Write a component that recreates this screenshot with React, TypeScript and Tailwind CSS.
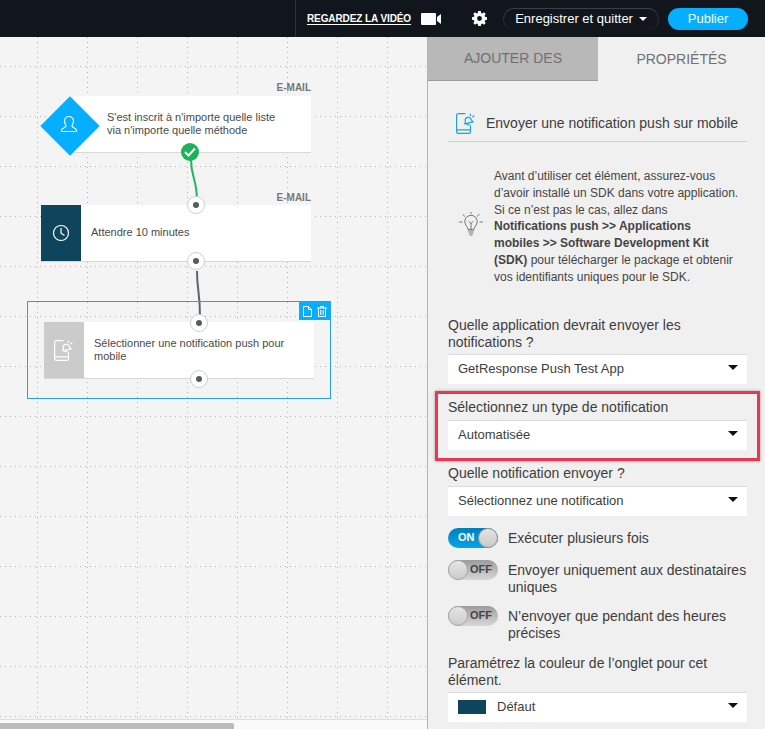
import React from "react";

const hLines = Array.from({ length: 15 }, (_, i) => 16 + i * 50);
const vLines = Array.from({ length: 9 }, (_, i) => 37.5 + i * 50);

function Grid() {
  return (
    <svg className="absolute inset-0" width="427" height="692">
      {hLines.map((y) => (
        <line key={y} x1="0" x2="427" y1={y - 37 + 0.5} y2={y - 37 + 0.5} stroke="#b4b4b4" strokeWidth="1" strokeDasharray="1 4" />
      ))}
      {vLines.map((x) => (
        <line key={x} y1="0" y2="692" x1={x} x2={x} stroke="#b4b4b4" strokeWidth="1" strokeDasharray="1 4" />
      ))}
    </svg>
  );
}

function Port({ x, y }: { x: number; y: number }) {
  return (
    <div
      className="absolute w-[18px] h-[18px] rounded-full bg-white border border-[#cfcfcf] flex items-center justify-center"
      style={{ left: x - 9, top: y - 9 }}
    >
      <div className="w-[6px] h-[6px] rounded-full bg-[#555b60]" />
    </div>
  );
}

function PushIcon({ color }: { color: string }) {
  return (
    <svg width="20" height="21" viewBox="0 0 20 21" fill="none" stroke={color} strokeWidth="1.2" strokeLinecap="round" strokeLinejoin="round">
      <path d="M9 .6H2.200A1.600 1.600 0 0 0 .6 2.200v16.600a1.600 1.600 0 0 0 1.600 1.600h10.700a1.600 1.600 0 0 0 1.600-1.600v-6.300" />
      <path d="M.6 16.800h13.900" />
      <path d="M8.500 10.800c1.100-.7 1-1.700.8-3-.3-1.800.8-3.200 2.300-3.500 1.600-.3 3 .7 3.600 2.200.5 1.300 1 2 2 2.300z" />
      <path d="M10.500 10.800c.5 1 1.600 1.300 2.600.7" />
      <path d="M14.200 1.200l.5 1.300M18 2.800l-1.200 1" />
    </svg>
  );
}

function Caret() {
  return <div className="w-0 h-0 border-x-[5px] border-x-transparent border-t-[5px] border-t-[#111]" />;
}

function Select({ label, swatch, className }: { label: string; swatch?: boolean; className?: string }) {
  return (
    <div className={`h-[30px] bg-white border-t border-[#dcdcdc] flex items-center justify-between pl-[10px] pr-[9px] text-[13px] text-[#3d3d3d] ${className ?? ""}`}>
      <div className="flex items-center">
        {swatch && <div className="w-[28px] h-[14px] bg-[#0e455c] mr-[11px]" />}
        <span>{label}</span>
      </div>
      <div className="-mt-[3px]">
        <Caret />
      </div>
    </div>
  );
}

function Toggle({ on }: { on?: boolean }) {
  return on ? (
    <div className="relative w-[50px] h-[20px] rounded-full bg-gradient-to-b from-[#0080bd] to-[#06a5e6] shrink-0">
      <span className="absolute left-[10px] top-[2px] text-[11px] leading-[15px] font-bold text-white">ON</span>
      <div className="absolute right-0 top-0 w-[20px] h-[20px] rounded-full bg-gradient-to-b from-[#e4e4e4] to-[#c8c8c8] border border-[#9a9a9a]" />
    </div>
  ) : (
    <div className="relative w-[50px] h-[20px] rounded-full bg-gradient-to-b from-[#9c9c9c] to-[#d8d8d8] shrink-0">
      <div className="absolute left-0 top-0 w-[20px] h-[20px] rounded-full bg-gradient-to-b from-[#e6e6e6] to-[#cbcbcb] border border-[#a5a5a5]" />
      <span className="absolute left-[22px] top-[2px] text-[11px] leading-[15px] font-bold text-[#444]">OFF</span>
    </div>
  );
}

export default function App() {
  return (
    <div className="w-[765px] h-[729px] overflow-hidden flex flex-col bg-[#f4f4f4] text-[#3d3d3d] font-['Liberation_Sans',Arial,sans-serif]">
      {/* top bar */}
      <header className="h-[37px] shrink-0 bg-[#10161b] flex items-center">
        <div className="w-[295px] h-full" />
        <div className="w-px h-full bg-[#2b3238]" />
        <span className="ml-[11px] text-[10px] font-bold text-white underline underline-offset-2 tracking-[-0.1px]">REGARDEZ LA VIDÉO</span>
        <svg className="ml-[10px]" width="20" height="12" viewBox="0 0 20 12" fill="#fff">
          <rect x="0" y="0" width="15" height="12" rx="1" />
          <path d="M16 4l4-3v10l-4-3z" />
        </svg>
        <svg className="ml-[31px]" width="15" height="15" viewBox="0 0 16 16" fill="#fff">
          <path fillRule="evenodd" d="M6.600 0h2.800l.4 2.100 1.200.5L12.800 1.400 14.600 3.200 13.400 5l.5 1.200 2.100.4v2.800l-2.100.4-.5 1.200 1.200 1.800-1.800 1.800-1.800-1.200-1.200.5-.4 2.100H6.600l-.4-2.100-1.200-.5-1.800 1.200-1.800-1.800L2.600 11l-.5-1.200L0 9.400V6.600l2.100-.4.5-1.200L1.400 3.200 3.200 1.400 5 2.600l1.200-.5zM8 5.400a2.600 2.600 0 1 0 0 5.200 2.600 2.600 0 0 0 0-5.200z" />
        </svg>
        <div className="ml-[16px] w-[156px] h-[22px] rounded-full border-t border-x border-t-[#3a4046] border-x-[#2a3036] flex items-center justify-center gap-[6px] text-[13px] text-white">
          <span>Enregistrer et quitter</span>
          <div className="w-0 h-0 border-x-[4px] border-x-transparent border-t-[4px] border-t-white" />
        </div>
        <div className="ml-[9px] w-[80px] h-[22px] rounded-full bg-[#05aeff] flex items-center justify-center text-[13px] text-white">Publier</div>
      </header>
      <div className="flex-1 flex min-h-0">
        {/* canvas */}
        <main className="relative w-[427px] shrink-0 overflow-hidden bg-[#f4f4f4]">
          <Grid />

          <svg className="absolute inset-0" width="427" height="692" fill="none">
            <path d="M191 122c0 20 6 18 6 43" stroke="#1fb45f" strokeWidth="2" />
            <path d="M197 234c0 20 3 20 3 46" stroke="#5d6266" strokeWidth="2" />
          </svg>

          {/* Node 1 */}
          <div className="absolute right-[116px] top-[45px] text-[10px] leading-[12px] font-bold text-[#777]">E-MAIL</div>
          <div className="absolute left-[71px] top-[59px] w-[240px] h-[57px] bg-white border-b border-[#d8d8d8] flex items-center pl-[36px] pr-[20px] text-[11px] leading-[13px] text-[#4a4a4a]">
            <span>S'est inscrit à n'importe quelle liste via n'importe quelle méthode</span>
          </div>
          <div className="absolute left-[49px] top-[68px] w-[42px] h-[42px] rotate-45 bg-[#05aeff]" />
          <svg className="absolute left-[60px] top-[78px]" width="18" height="18" viewBox="0 0 18 18" fill="none" stroke="#fff" strokeWidth="1.1">
            <path d="M1.500 16.500h15v-1.500c0-1.500-4.500-2.500-4.500-4 0-1 1.500-2 1.500-5 0-2.500-1.800-4.500-4.500-4.500S4.500 3.500 4.500 6c0 3 1.500 4 1.500 5 0 1.500-4.500 2.500-4.500 4z" />
          </svg>
          <div className="absolute left-[181px] top-[106px] w-[18px] h-[18px] rounded-full bg-[#19b35a] flex items-center justify-center">
            <svg width="12" height="10" viewBox="0 0 12 10" fill="none" stroke="#fff" strokeWidth="2">
              <path d="M1 5l3.500 3.500L11 1.500" />
            </svg>
          </div>

          {/* Node 2 */}
          <div className="absolute right-[116px] top-[155px] text-[10px] leading-[12px] font-bold text-[#777]">E-MAIL</div>
          <div className="absolute left-[41px] top-[168px] w-[270px] h-[57px] bg-white border-b border-[#d8d8d8] flex">
            <div className="w-[40px] h-[56px] bg-[#0e455c] flex items-center justify-center">
              <svg width="18" height="18" viewBox="0 0 18 18" fill="none" stroke="#fff" strokeWidth="1.2">
                <circle cx="9" cy="9" r="7.500" />
                <path d="M9 4v5.200l3.500 2.300" />
              </svg>
            </div>
            <div className="pl-[10px] pb-[2px] flex items-center text-[11px] text-[#4a4a4a]">Attendre 10 minutes</div>
          </div>
          <Port x={196} y={168} />
          <Port x={196} y={224} />

          {/* Selected node */}
          <div className="absolute left-[27px] top-[264px] w-[304px] h-[98px] border border-[#23a8d6]">
            <div className="absolute right-0 top-0 w-[31px] h-[18px] bg-[#06aeff] flex items-center justify-center gap-[5px]">
              <svg width="9" height="11" viewBox="0 0 9 11" fill="none" stroke="#fff" strokeWidth="1">
                <path d="M.5.500h5l3 3v7h-8zM5.500.500v3h3" />
              </svg>
              <svg width="10" height="11" viewBox="0 0 10 11" fill="none" stroke="#fff" strokeWidth="1">
                <path d="M0 2h10M3.500 2V.500h3V2M1.500 2v8.500h7V2M3.800 4v5M6.200 4v5" />
              </svg>
            </div>
          </div>
          <div className="absolute left-[44px] top-[285px] w-[270px] h-[57px] bg-white border-b border-[#d8d8d8] flex">
            <div className="w-[40px] h-[56px] bg-[#cbcbcb] flex items-center justify-center shrink-0">
              <PushIcon color="#fff" />
            </div>
            <div className="pl-[10px] pr-[8px] flex items-center text-[11px] leading-[13px] text-[#4a4a4a]">
              Sélectionner une notification push pour mobile
            </div>
          </div>
          <Port x={199} y={286} />
          <Port x={199} y={342} />

          {/* scrollbar */}
          <div className="absolute left-0 right-0 bottom-0 h-[10px] bg-[#f9f9f9] border-t border-[#dedede]">
            <div className="absolute left-0 bottom-0 w-[234px] h-[6px] rounded-tr-[2px] bg-[#bbbbbb]" />
          </div>
        </main>

        {/* panel */}
        <aside className="relative flex-1 border-l border-[#b4b4b4] bg-[#f0f0f0] flex flex-col">
          <div className="h-[44px] shrink-0 flex text-[14px]">
            <div className="w-[170px] bg-[#b8b8b8] border-b border-[#9c9c9c] flex items-center justify-center text-[#707070]">AJOUTER DES</div>
            <div className="flex-1 flex items-center justify-center text-[#707070]">PROPRIÉTÉS</div>
          </div>
          <div className="pl-[20px] pr-[18px] flex flex-col">
            <div className="h-[61px] border-b border-[#cfcfcf] flex items-center pl-[8px] pt-[24px]">
              <PushIcon color="#1ba3e0" />
              <span className="ml-[10px] text-[14px] text-[#3d3d3d]">Envoyer une notification push sur mobile</span>
            </div>
            <div className="flex items-center mt-[26px] text-[12px] leading-[16.800px] text-[#444]">
              <svg className="shrink-0 ml-[11px] -mt-[6px]" width="24" height="24" viewBox="0 0 24 24" fill="none" stroke="#666" strokeWidth="0.9" strokeLinecap="round">
                <path d="M9 17c0-2.500-3.200-3.500-3.200-7.500a6.200 6.200 0 0 1 12.400 0c0 4-3.200 5-3.200 7.500z" />
                <path d="M9.500 19h5M10 21h4M11 23h2M10 9.500l2 2 2-2M12 11.500V17" />
                <path d="M0.500 10h2.500M21 10h2.500M4 2.500l1.500 1.800M20 2.500l-1.500 1.800M12 0v1.500" />
              </svg>
              <p className="ml-[11px] w-[253px]">
                Avant d’utiliser cet élément, assurez-vous
                <br />
                d’avoir installé un SDK dans votre application.
                <br />
                Si ce n’est pas le cas, allez dans
                <br />
                <b>
                  Notifications push &gt;&gt; Applications
                  <br />
                  mobiles &gt;&gt; Software Development Kit
                  <br />
                  (SDK)
                </b>{" "}
                pour télécharger le package et obtenir
                <br />
                vos identifiants uniques pour le SDK.
              </p>
            </div>
            <div className="mt-[31px] text-[14px] leading-[17px]">Quelle application devrait envoyer les notifications ?</div>
            <Select label="GetResponse Push Test App" className="mt-[3px]" />
            <div className="mt-[15px] text-[14px] leading-[17px]">Sélectionnez un type de notification</div>
            <Select label="Automatisée" className="mt-[4px]" />
            <div className="mt-[15px] text-[14px] leading-[17px]">Quelle notification envoyer ?</div>
            <Select label="Sélectionnez une notification" className="mt-[4px]" />
            <div className="mt-[12px] flex items-center gap-[10px] text-[14px] leading-[17px]">
              <Toggle on />
              <span className="pt-[1px]">Exécuter plusieurs fois</span>
            </div>
            <div className="mt-[12px] flex gap-[10px] text-[14px] leading-[17px]">
              <Toggle />
              <span className="pt-[2px]">Envoyer uniquement aux destinataires uniques</span>
            </div>
            <div className="mt-[10px] flex gap-[10px] text-[14px] leading-[17px]">
              <Toggle />
              <span className="pt-[2px]">N’envoyer que pendant des heures précises</span>
            </div>
            <div className="mt-[13px] text-[14px] leading-[17px]">Paramétrez la couleur de l’onglet pour cet élément.</div>
            <Select label="Défaut" swatch className="mt-[3px]" />
          </div>
          {/* annotation */}
          <div className="absolute left-[7px] top-[354px] w-[325px] h-[70px] border-[3px] border-[#ea3650] shadow-[0_0_3px_rgba(0,0,0,0.35)]" />
        </aside>
      </div>
    </div>
  );
}
